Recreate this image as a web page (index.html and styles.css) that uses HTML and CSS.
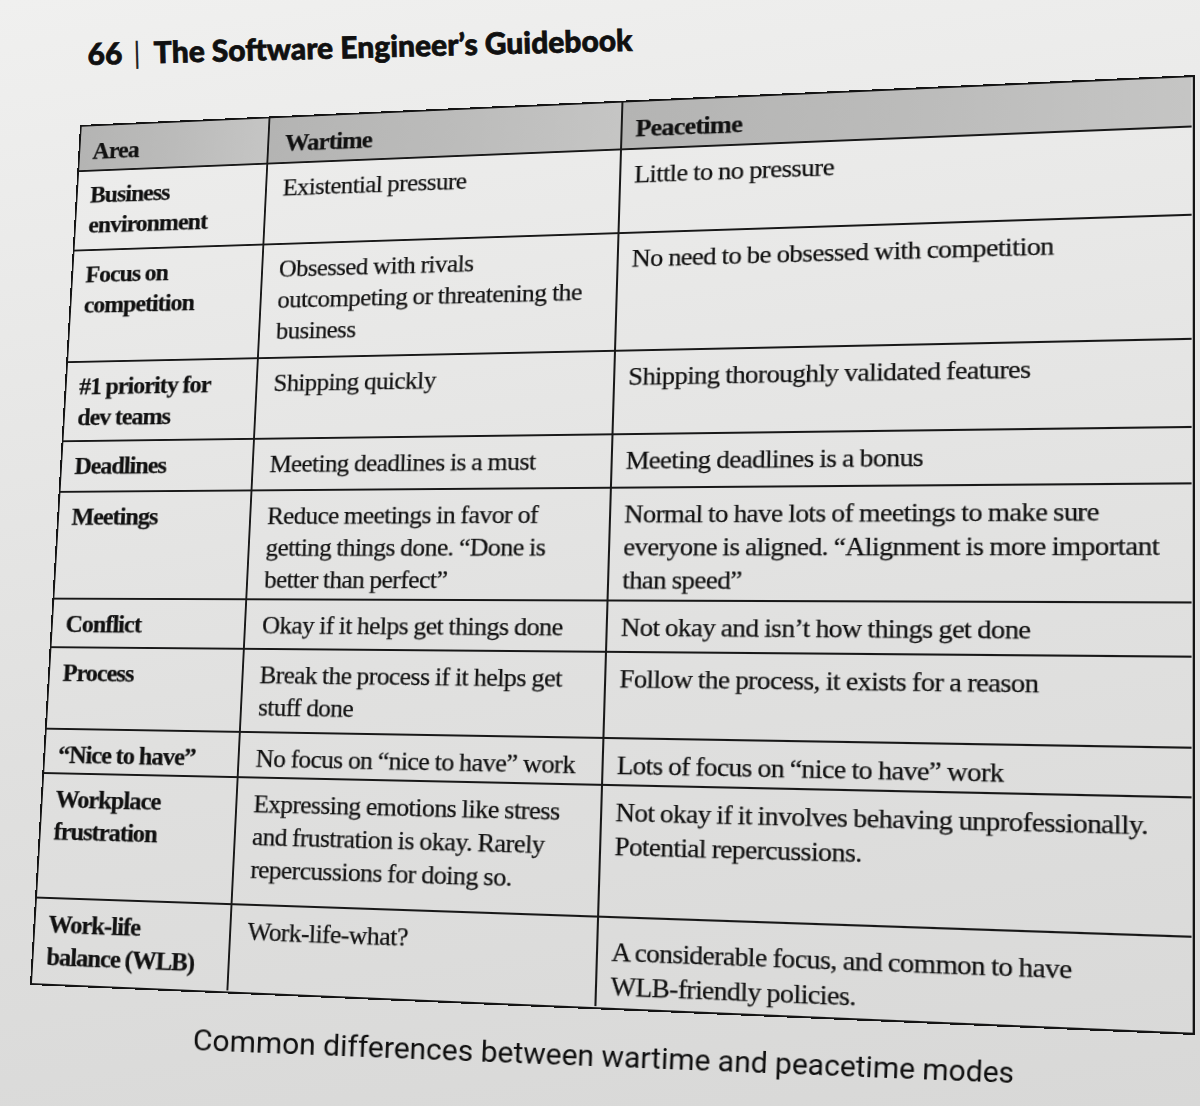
FILE: index.html
```html
<!DOCTYPE html>
<html lang="en">
<head>
<meta charset="utf-8">
<title>The Software Engineer's Guidebook – p. 66</title>
<link rel="stylesheet" href="styles.css">
</head>
<body>
<div class="page">
  <header class="running-head">
    <span class="folio">66</span><span class="sep">|</span><span class="book">The Software Engineer’s Guidebook</span>
  </header>

  <div class="figure">
    <div class="table">
      <div class="cell th c1">Area</div>
      <div class="cell th c2">Wartime</div>
      <div class="cell th c3">Peacetime</div>

      <div class="cell area c1">Business<br>environment</div>
      <div class="cell c2">Existential pressure</div>
      <div class="cell c3">Little to no pressure</div>

      <div class="cell area c1">Focus on<br>competition</div>
      <div class="cell c2">Obsessed with rivals<br>outcompeting or threatening the<br>business</div>
      <div class="cell c3">No need to be obsessed with competition</div>

      <div class="cell area c1">#1 priority for<br>dev teams</div>
      <div class="cell c2">Shipping quickly</div>
      <div class="cell c3">Shipping thoroughly validated features</div>

      <div class="cell area c1">Deadlines</div>
      <div class="cell c2">Meeting deadlines is a must</div>
      <div class="cell c3">Meeting deadlines is a bonus</div>

      <div class="cell area c1">Meetings</div>
      <div class="cell c2">Reduce meetings in favor of<br>getting things done. “Done is<br>better than perfect”</div>
      <div class="cell c3">Normal to have lots of meetings to make sure<br>everyone is aligned. “Alignment is more important<br>than speed”</div>

      <div class="cell area c1">Conflict</div>
      <div class="cell c2">Okay if it helps get things done</div>
      <div class="cell c3">Not okay and isn’t how things get done</div>

      <div class="cell area c1">Process</div>
      <div class="cell c2">Break the process if it helps get<br>stuff done</div>
      <div class="cell c3">Follow the process, it exists for a reason</div>

      <div class="cell area c1">“Nice to have”</div>
      <div class="cell c2">No focus on “nice to have” work</div>
      <div class="cell c3">Lots of focus on “nice to have” work</div>

      <div class="cell area c1">Workplace<br>frustration</div>
      <div class="cell c2">Expressing emotions like stress<br>and frustration is okay. Rarely<br>repercussions for doing so.</div>
      <div class="cell c3">Not okay if it involves behaving unprofessionally.<br>Potential repercussions.</div>

      <div class="cell area c1 last">Work-life<br>balance (WLB)</div>
      <div class="cell c2 last">Work-life-what?</div>
      <div class="cell c3 last wlb">A considerable focus, and common to have<br>WLB-friendly policies.</div>
    </div>
  </div>

  <p class="caption">Common differences between wartime and peacetime modes</p>
</div>
</body>
</html>
```

FILE: styles.css
```css
* { box-sizing: border-box; }

html, body {
  margin: 0;
  padding: 0;
}

body {
  width: 1200px;
  height: 1106px;
  overflow: hidden;
  background: linear-gradient(172deg, #f0f0ef 0%, #e8e8e7 30%, #e0e0df 60%, #d8d8d7 100%);
  color: #111;
  font-family: "Liberation Serif", "Times New Roman", serif;
}

.page {
  padding-top: 31px;
}

/* running head */
.running-head {
  margin-left: 88px;
  height: 44px;
  font-family: Lato, "Open Sans", sans-serif;
  font-weight: 900;
  font-size: 30px;
  line-height: 44px;
  color: #101010;
  -webkit-text-stroke: 0.7px #101010;
  transform: rotate(-1.5deg);
  transform-origin: 0 100%;
  white-space: nowrap;
}

.running-head .sep {
  font-weight: 400;
  -webkit-text-stroke: 0;
  margin: 0 13px 0 11px;
  color: #222;
}

/* table in perspective, as photographed */
.figure {
  margin-left: 80px;
  margin-top: 50px;
  width: 1120px;
  height: 910px;
  transform-origin: 0 0;
  transform: matrix3d(0.894060, -0.040092, 0, -0.0000910098,
                      -0.052587, 0.904496, 0, -0.0000471626,
                      0, 0, 1, 0,
                      0, 0, 0, 1);
}

.table {
  width: 1120px;
  height: 910px;
  display: grid;
  grid-template-columns: 207px 367px 541px;
  grid-template-rows: 50px 87px 121px 85px 54px 113px 51px 85px 46px 128px 85px;
  border: 2.5px solid #141414;
  font-size: 26px;
  line-height: 33px;
  letter-spacing: -0.55px;
  word-spacing: -0.5px;
}

.cell {
  border-right: 2px solid #181818;
  border-bottom: 2px solid #181818;
  padding: 9px 6px 0 14px;
  white-space: nowrap;
  -webkit-text-stroke: 0.25px #111;
}

.cell.c2 { padding-left: 17px; }
.cell.c3 { border-right: none; padding-left: 13px; }
.cell.last { border-bottom: none; }
.cell.wlb { padding-top: 16px; }

.th {
  background: linear-gradient(90deg, #b4b4b3 0%, #bbbbba 50%, #c5c5c4 100%);
  font-weight: 700;
  letter-spacing: -0.8px;
  padding-top: 11px;
}

.area {
  font-weight: 700;
  letter-spacing: -1px;
}

/* caption */
.caption {
  margin: -14px 0 0 193px;
  font-family: Roboto, "Open Sans", sans-serif;
  font-size: 30px;
  line-height: 38px;
  color: #0f0f0f;
  white-space: nowrap;
  transform: rotate(2.3deg);
  transform-origin: 0 50%;
}
```
